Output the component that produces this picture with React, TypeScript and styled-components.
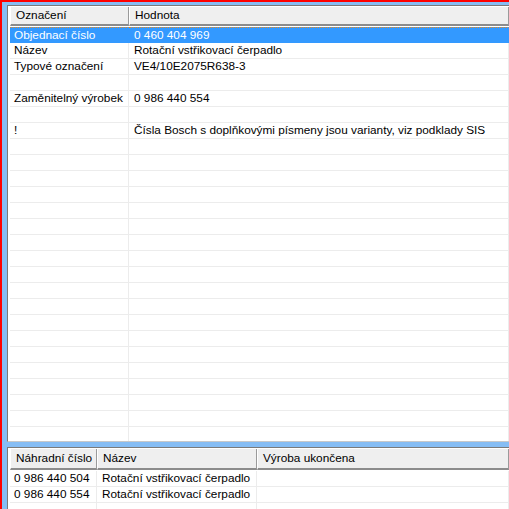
import styled, { createGlobalStyle } from 'styled-components';

const GlobalStyle = createGlobalStyle`
  html, body {
    margin: 0;
    padding: 0;
    overflow: hidden;
  }
  body {
    font-family: "Liberation Sans", Arial, sans-serif;
    font-size: 11.8px;
    color: #000;
  }
`;

const Frame = styled.div`
  width: 509px;
  height: 509px;
  box-sizing: border-box;
  border-top: 2px solid #ff0000;
  border-left: 2px solid #ff0000;
  background: #86bdf4;
  padding: 3px 0 0 5px;
  display: flex;
  flex-direction: column;
  gap: 5px;
  overflow: hidden;
`;

const Panel = styled.div<{ $height: number }>`
  height: ${(p) => p.$height}px;
  flex-shrink: 0;
  box-sizing: border-box;
  background: #fff;
  border-top: 1px solid #7a7a7a;
  border-left: 1px solid #7a7a7a;
  border-bottom: 1px solid #c8c8c8;
  padding: 1px 0 0 2px;
  overflow: hidden;
`;

const Grid = styled.div<{ $cols: string; $head: number }>`
  display: grid;
  grid-template-columns: ${(p) => p.$cols};
  grid-template-rows: ${(p) => p.$head + 1}px;
  grid-auto-rows: 16px;
  height: 100%;
`;

const HeadCell = styled.div<{ $h: number }>`
  height: ${(p) => p.$h}px;
  box-sizing: border-box;
  background: #efefef;
  border-left: 1px solid #ffffff;
  border-right: 1px solid #9a9a9a;
  border-bottom: 2px solid #8c8c8c;
  padding-left: 5px;
  line-height: ${(p) => p.$h - 2}px;
  white-space: nowrap;
`;

const Row = styled.div`
  display: contents;
`;

const Cell = styled.div<{ $selected?: boolean; $first?: boolean }>`
  box-sizing: border-box;
  height: 16px;
  line-height: 15px;
  padding-left: ${(p) => (p.$first ? 4 : 5)}px;
  border-bottom: 1px solid #ececec;
  border-right: 1px solid #ececec;
  white-space: nowrap;
  overflow: hidden;
  background: ${(p) => (p.$selected ? '#3399ff' : 'transparent')};
  color: ${(p) => (p.$selected ? '#fff' : '#000')};
  ${(p) =>
    p.$selected
      ? `border-top: 1px dotted #e8891c; line-height: 14px; border-bottom-color: #3399ff; border-right-color: #3399ff;`
      : ''}
`;

const upperRows: [string, string][] = [
  ['Objednací číslo', '0 460 404 969'],
  ['Název', 'Rotační vstřikovací čerpadlo'],
  ['Typové označení', 'VE4/10E2075R638-3'],
  ['', ''],
  ['Zaměnitelný výrobek', '0 986 440 554'],
  ['', ''],
  ['!', 'Čísla Bosch s doplňkovými písmeny jsou varianty, viz podklady SIS'],
];

const lowerRows: [string, string, string][] = [
  ['0 986 440 504', 'Rotační vstřikovací čerpadlo', ''],
  ['0 986 440 554', 'Rotační vstřikovací čerpadlo', ''],
];

export default function App() {
  const upperFill = Array.from({ length: 30 - upperRows.length }, () => ['', ''] as [string, string]);
  const lowerFill = Array.from({ length: 2 }, () => ['', '', ''] as [string, string, string]);

  return (
    <>
      <GlobalStyle />
      <Frame>
        <Panel $height={437}>
          <Grid $cols="119px 1fr" $head={19}>
            <Row>
              <HeadCell $h={19}>Označení</HeadCell>
              <HeadCell $h={19}>Hodnota</HeadCell>
            </Row>
            {[...upperRows, ...upperFill].map((r, i) => (
              <Row key={i}>
                <Cell $first $selected={i === 0}>{r[0]}</Cell>
                <Cell $selected={i === 0}>{r[1]}</Cell>
              </Row>
            ))}
          </Grid>
        </Panel>
        <Panel $height={70}>
          <Grid $cols="87px 160px 1fr" $head={21}>
            <Row>
              <HeadCell $h={21}>Náhradní číslo</HeadCell>
              <HeadCell $h={21}>Název</HeadCell>
              <HeadCell $h={21}>Výroba ukončena</HeadCell>
            </Row>
            {[...lowerRows, ...lowerFill].map((r, i) => (
              <Row key={i}>
                <Cell $first>{r[0]}</Cell>
                <Cell>{r[1]}</Cell>
                <Cell>{r[2]}</Cell>
              </Row>
            ))}
          </Grid>
        </Panel>
      </Frame>
    </>
  );
}
